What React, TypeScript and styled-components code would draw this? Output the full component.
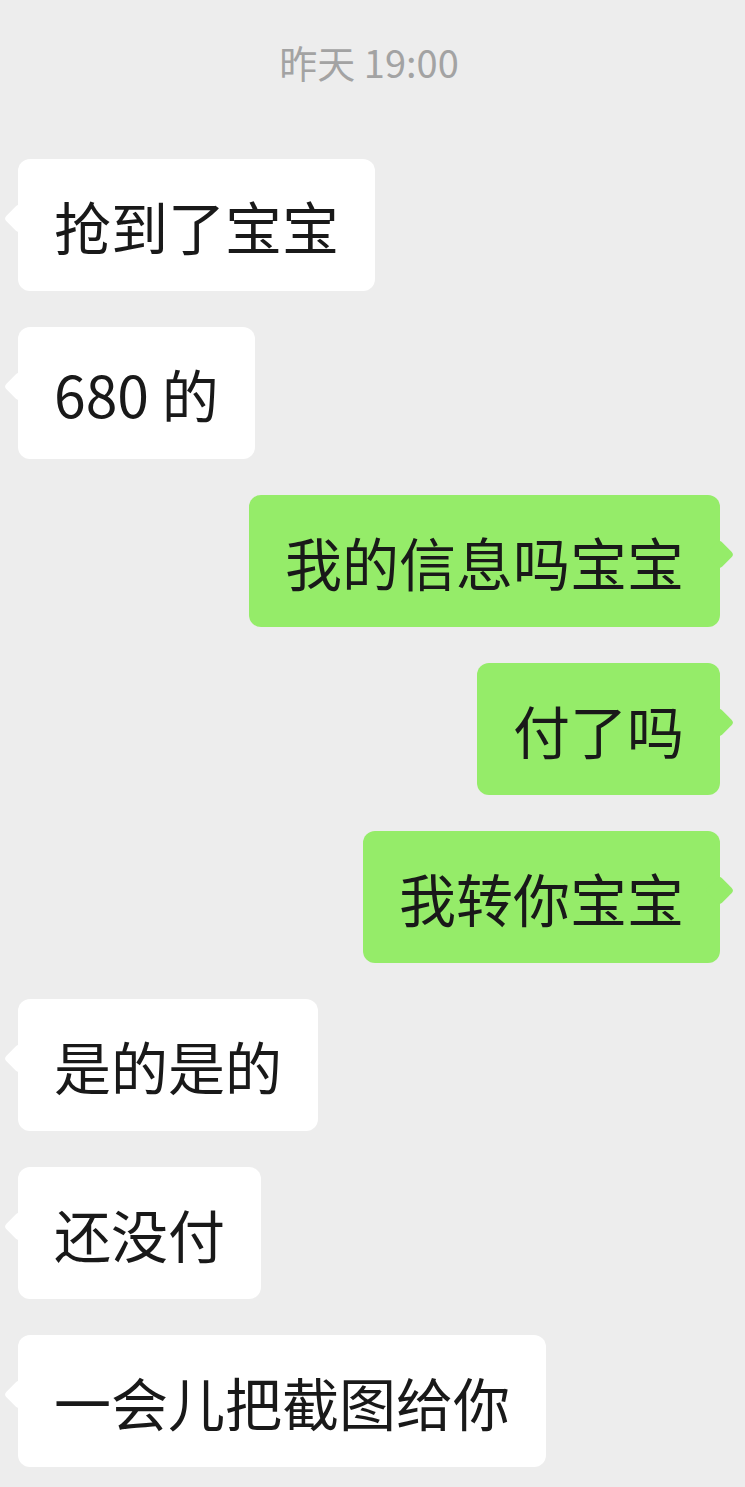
import React from 'react';
import styled, { createGlobalStyle } from 'styled-components';

const GlobalStyle = createGlobalStyle`
  html, body {
    margin: 0;
    padding: 0;
    background: #ededed;
  }
  body {
    font-family: "Noto Sans CJK SC", "Noto Sans", sans-serif;
  }
`;

const ChatContainer = styled.div`
  min-height: 100vh;
  box-sizing: border-box;
  background: #ededed;
  padding: 42px 25px 0 18px;
  display: flex;
  flex-direction: column;
`;

const TimeStamp = styled.div`
  text-align: center;
  font-size: 38px;
  line-height: 40px;
  color: #a3a3a3;
  margin-bottom: 77px;
`;

const MessageRow = styled.div<{ $mine?: boolean }>`
  display: flex;
  justify-content: ${(props) => (props.$mine ? 'flex-end' : 'flex-start')};
  margin-bottom: 36px;
`;

const Bubble = styled.div<{ $mine?: boolean }>`
  position: relative;
  background: ${(props) => (props.$mine ? '#95ec69' : '#ffffff')};
  color: #191919;
  font-size: 57px;
  line-height: 72px;
  padding: 30px 36px;
  border-radius: 12px;
  white-space: nowrap;

  &::before {
    content: '';
    position: absolute;
    top: 49px;
    ${(props) => (props.$mine ? 'right: -10px;' : 'left: -10px;')}
    width: 21px;
    height: 21px;
    background: inherit;
    border-radius: 4px;
    transform: rotate(45deg);
  }
`;

type Message = { text: string; mine?: boolean };

const messages: Message[] = [
  { text: '抢到了宝宝' },
  { text: '680 的' },
  { text: '我的信息吗宝宝', mine: true },
  { text: '付了吗', mine: true },
  { text: '我转你宝宝', mine: true },
  { text: '是的是的' },
  { text: '还没付' },
  { text: '一会儿把截图给你' },
];

const App: React.FC = () => {
  return (
    <>
      <GlobalStyle />
      <ChatContainer>
        <TimeStamp>昨天 19:00</TimeStamp>
        {messages.map((m, i) => (
          <MessageRow key={i} $mine={m.mine}>
            <Bubble $mine={m.mine}>{m.text}</Bubble>
          </MessageRow>
        ))}
      </ChatContainer>
    </>
  );
};

export default App;
